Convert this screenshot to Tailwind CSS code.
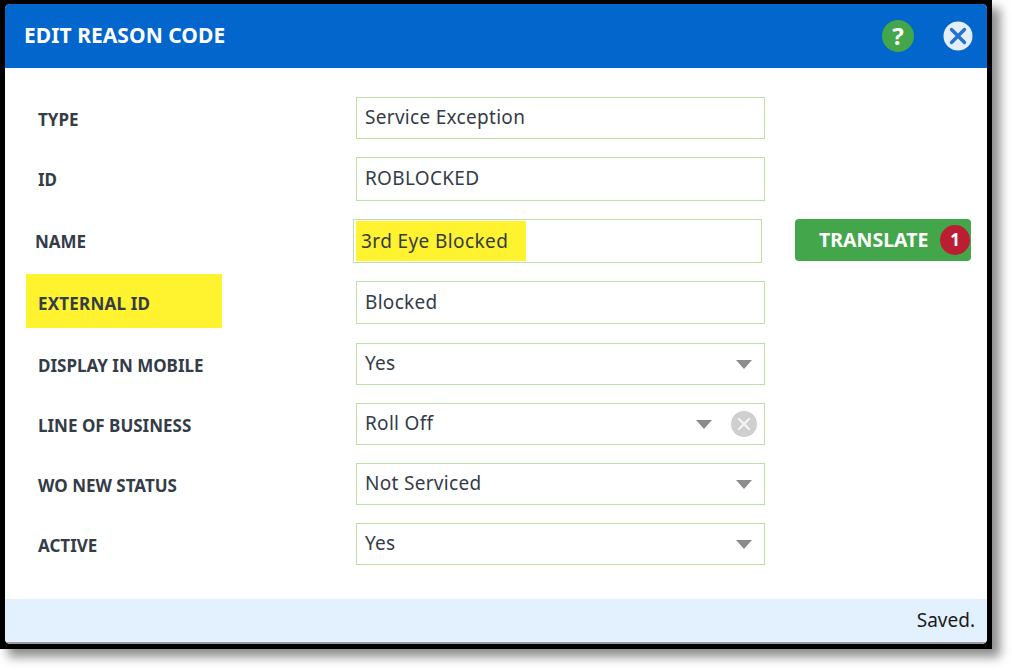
<!DOCTYPE html>
<html lang="en">
<head>
    <meta charset="UTF-8">
    <title>Edit Reason Code</title>
    <script src="https://cdn.jsdelivr.net/npm/@tailwindcss/browser@4"></script>
</head>
<body class="bg-white font-['Noto_Sans',sans-serif] h-[670px] overflow-hidden">
    <div class="w-[992px] h-[649px] bg-black pt-[4px] pb-[5px] px-[5px] shadow-[8px_8px_10px_rgba(0,0,0,0.45)]">
        <div class="h-full flex flex-col bg-white rounded-[5px] overflow-hidden">

            <div class="h-[64px] shrink-0 bg-[#0266cc] flex items-center pl-[19px] pr-[14px]">
                <p class="text-white font-bold text-[21px] tracking-[0.05px] flex-1">EDIT REASON CODE</p>
                <div class="w-[32px] h-[32px] rounded-full bg-[#43a64a] flex items-center justify-center text-white font-bold text-[24px] mr-[29px]">?</div>
                <svg class="w-[30px] h-[30px]" viewBox="0 0 30 30">
                    <circle cx="15" cy="15" r="14.5" fill="#e3eefa"/>
                    <path d="M8.5 8.5L21.5 21.5M21.5 8.5L8.5 21.5" stroke="#2273cf" stroke-width="3.4" stroke-linecap="round"/>
                </svg>
            </div>

            <div class="flex-1 pt-[29px] pl-[33px] text-[#333c47]">
                <div class="flex items-center h-[42px] mb-[18px]">
                    <p class="w-[318px] pt-[4px] font-bold text-[17px]">TYPE</p>
                    <div class="w-[409px] h-full border border-[#bbe2a3] flex items-center pl-[8px] pb-[2px] text-[19px] tracking-[0.3px]">Service Exception</div>
                </div>
                <div class="flex items-center h-[44px] mb-[18px]">
                    <p class="w-[318px] pt-[2px] font-bold text-[17px]">ID</p>
                    <div class="w-[409px] h-full border border-[#bbe2a3] flex items-center pl-[8px] pb-[2px] text-[19px] tracking-[0.3px]">ROBLOCKED</div>
                </div>
                <div class="flex items-center h-[44px] mb-[18px]">
                    <p class="w-[318px] -ml-[3px] pt-[2px] font-bold text-[17px]">NAME</p>
                    <div class="w-[409px] h-full border border-[#bbe2a3] flex items-center pl-[2px]">
                        <span class="w-[170px] h-[40px] bg-[#fff22e] flex items-center pl-[5px] text-[19px] tracking-[0.4px]">3rd Eye Blocked</span>
                    </div>
                    <div class="relative w-[176px] h-[42px] ml-[33px] -mt-[2px] bg-[#43a64a] rounded-[4px] text-white font-bold text-[19.5px] flex items-center pl-[24px]">
                        TRANSLATE
                        <span class="absolute right-[1px] top-[6px] w-[30px] h-[30px] rounded-full bg-[#bb1e32] flex items-center justify-center text-[17px]">1</span>
                    </div>
                </div>
                <div class="flex items-center h-[43px] mb-[19px]">
                    <div class="w-[318px] mb-[4px]">
                        <p class="w-[196px] h-[54px] -ml-[12px] pl-[12px] pt-[6px] bg-[#fff22e] flex items-center font-bold text-[17px] tracking-[0.2px]">EXTERNAL ID</p>
                    </div>
                    <div class="w-[409px] h-full border border-[#bbe2a3] flex items-center pl-[8px] text-[19px] tracking-[0.3px]">Blocked</div>
                </div>
                <div class="flex items-center h-[42px] mb-[18px]">
                    <p class="w-[318px] pt-[4px] font-bold text-[17px]">DISPLAY IN MOBILE</p>
                    <div class="w-[409px] h-full border border-[#bbe2a3] flex items-center pl-[8px] pr-[12px] text-[19px] tracking-[0.3px]">
                        <span class="flex-1 pb-[2px]">Yes</span>
                        <svg class="w-[16px] h-[9px]" viewBox="0 0 16 9"><path d="M0 0H16L8 9Z" fill="#8c8c8c"/></svg>
                    </div>
                </div>
                <div class="flex items-center h-[42px] mb-[18px]">
                    <p class="w-[318px] pt-[4px] font-bold text-[17px]">LINE OF BUSINESS</p>
                    <div class="w-[409px] h-full border border-[#bbe2a3] flex items-center pl-[8px] pr-[7px] text-[19px] tracking-[0.3px]">
                        <span class="flex-1 pb-[2px]">Roll Off</span>
                        <svg class="w-[16px] h-[9px] mr-[19px]" viewBox="0 0 16 9"><path d="M0 0H16L8 9Z" fill="#8c8c8c"/></svg>
                        <svg class="w-[26px] h-[26px]" viewBox="0 0 26 26">
                            <circle cx="13" cy="13" r="13" fill="#cfcfcf"/>
                            <path d="M7.5 7.5L18.5 18.5M18.5 7.5L7.5 18.5" stroke="#f4f4f4" stroke-width="2.2"/>
                        </svg>
                    </div>
                </div>
                <div class="flex items-center h-[42px] mb-[18px]">
                    <p class="w-[318px] pt-[4px] font-bold text-[17px]">WO NEW STATUS</p>
                    <div class="w-[409px] h-full border border-[#bbe2a3] flex items-center pl-[8px] pr-[12px] text-[19px] tracking-[0.3px]">
                        <span class="flex-1 pb-[2px]">Not Serviced</span>
                        <svg class="w-[16px] h-[9px]" viewBox="0 0 16 9"><path d="M0 0H16L8 9Z" fill="#8c8c8c"/></svg>
                    </div>
                </div>
                <div class="flex items-center h-[42px]">
                    <p class="w-[318px] pt-[4px] font-bold text-[17px]">ACTIVE</p>
                    <div class="w-[409px] h-full border border-[#bbe2a3] flex items-center pl-[8px] pr-[12px] text-[19px] tracking-[0.3px]">
                        <span class="flex-1 pb-[2px]">Yes</span>
                        <svg class="w-[16px] h-[9px]" viewBox="0 0 16 9"><path d="M0 0H16L8 9Z" fill="#8c8c8c"/></svg>
                    </div>
                </div>
            </div>

            <div class="h-[45px] shrink-0 bg-[#e3f0fd] border-b-2 border-[#9a9a9a] flex items-center justify-end pr-[12px] text-[19px] text-[#1a1a1a]">Saved.</div>
        </div>
    </div>
</body>
</html>
